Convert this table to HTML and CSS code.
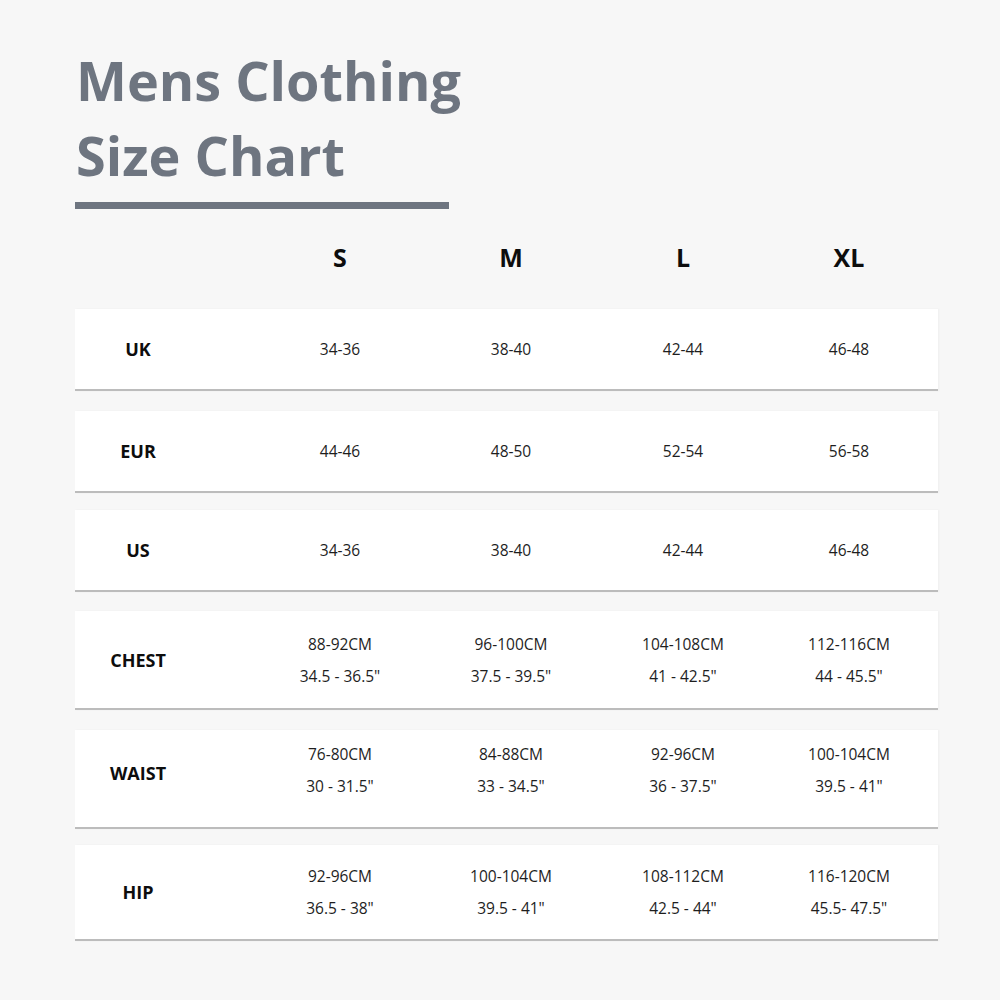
FILE: index.html
```html
<!DOCTYPE html>
<html lang="en">
<head>
<meta charset="utf-8">
<title>Mens Clothing Size Chart</title>
<link rel="stylesheet" href="styles.css">
</head>
<body>
<main class="page">
  <h1 class="title">Mens Clothing<br>Size Chart</h1>
  <div class="title-bar"></div>

  <div class="head-row">
    <div class="cell-label"></div>
    <div class="head">S</div>
    <div class="head">M</div>
    <div class="head">L</div>
    <div class="head">XL</div>
  </div>

  <div class="rows">
    <div class="row">
      <div class="cell-label">UK</div>
      <div class="cell">34-36</div>
      <div class="cell">38-40</div>
      <div class="cell">42-44</div>
      <div class="cell">46-48</div>
    </div>
    <div class="row row-eur">
      <div class="cell-label">EUR</div>
      <div class="cell">44-46</div>
      <div class="cell">48-50</div>
      <div class="cell">52-54</div>
      <div class="cell">56-58</div>
    </div>
    <div class="row row-us">
      <div class="cell-label">US</div>
      <div class="cell">34-36</div>
      <div class="cell">38-40</div>
      <div class="cell">42-44</div>
      <div class="cell">46-48</div>
    </div>
    <div class="row row-tall">
      <div class="cell-label">CHEST</div>
      <div class="cell"><span>88-92CM</span><span>34.5 - 36.5&quot;</span></div>
      <div class="cell"><span>96-100CM</span><span>37.5 - 39.5&quot;</span></div>
      <div class="cell"><span>104-108CM</span><span>41 - 42.5&quot;</span></div>
      <div class="cell"><span>112-116CM</span><span>44 - 45.5&quot;</span></div>
    </div>
    <div class="row row-tall row-waist">
      <div class="cell-label">WAIST</div>
      <div class="cell"><span>76-80CM</span><span>30 - 31.5&quot;</span></div>
      <div class="cell"><span>84-88CM</span><span>33 - 34.5&quot;</span></div>
      <div class="cell"><span>92-96CM</span><span>36 - 37.5&quot;</span></div>
      <div class="cell"><span>100-104CM</span><span>39.5 - 41&quot;</span></div>
    </div>
    <div class="row row-tall row-hip">
      <div class="cell-label">HIP</div>
      <div class="cell"><span>92-96CM</span><span>36.5 - 38&quot;</span></div>
      <div class="cell"><span>100-104CM</span><span>39.5 - 41&quot;</span></div>
      <div class="cell"><span>108-112CM</span><span>42.5 - 44&quot;</span></div>
      <div class="cell"><span>116-120CM</span><span>45.5- 47.5&quot;</span></div>
    </div>
  </div>
</main>
</body>
</html>
```

FILE: styles.css
```css
* { box-sizing: border-box; }

html, body {
  margin: 0;
  padding: 0;
  background: #f7f7f7;
}

body {
  font-family: "Open Sans", "Liberation Sans", sans-serif;
  color: #1c1c1c;
}

.page {
  width: 1000px;
  height: 1000px;
  padding: 43px 62px 0 75px;
}

.title {
  margin: 0 0 0 1px;
  font-size: 54px;
  line-height: 75px;
  font-weight: 700;
  color: #6e7580;
}

.title-bar {
  margin-top: 9px;
  width: 374px;
  height: 7px;
  background: #6e7580;
}

.head-row,
.row {
  display: grid;
  grid-template-columns: 179px 172px 170px 174px 158px;
  align-items: center;
}

.head-row {
  height: 96px;
  margin-bottom: 4px;
}

.head {
  text-align: center;
  font-size: 25px;
  font-weight: 700;
  color: #0d0d0d;
}

.rows {
  display: flex;
  flex-direction: column;
  gap: 19px;
  width: 863px;
}

.row {
  height: 82px;
  background: #ffffff;
  border-bottom: 2px solid #bcbcbc;
  box-shadow: 1px 0 2px rgba(0, 0, 0, 0.04);
}

.row-eur { margin-top: 1px; }
.row-us { margin-top: -2px; }

.row-tall { height: 99px; }
.row-waist { padding-bottom: 12px; margin-top: 1px; }
.row-waist .cell { margin-bottom: 6px; }
.row-hip { height: 96px; margin-top: -3px; }

.cell-label {
  width: 126px;
  text-align: center;
  font-size: 18px;
  font-weight: 700;
  color: #0d0d0d;
}

.cell {
  display: flex;
  flex-direction: column;
  align-items: center;
  font-size: 15.5px;
  line-height: 32px;
  color: #1e1e1e;
}
```
